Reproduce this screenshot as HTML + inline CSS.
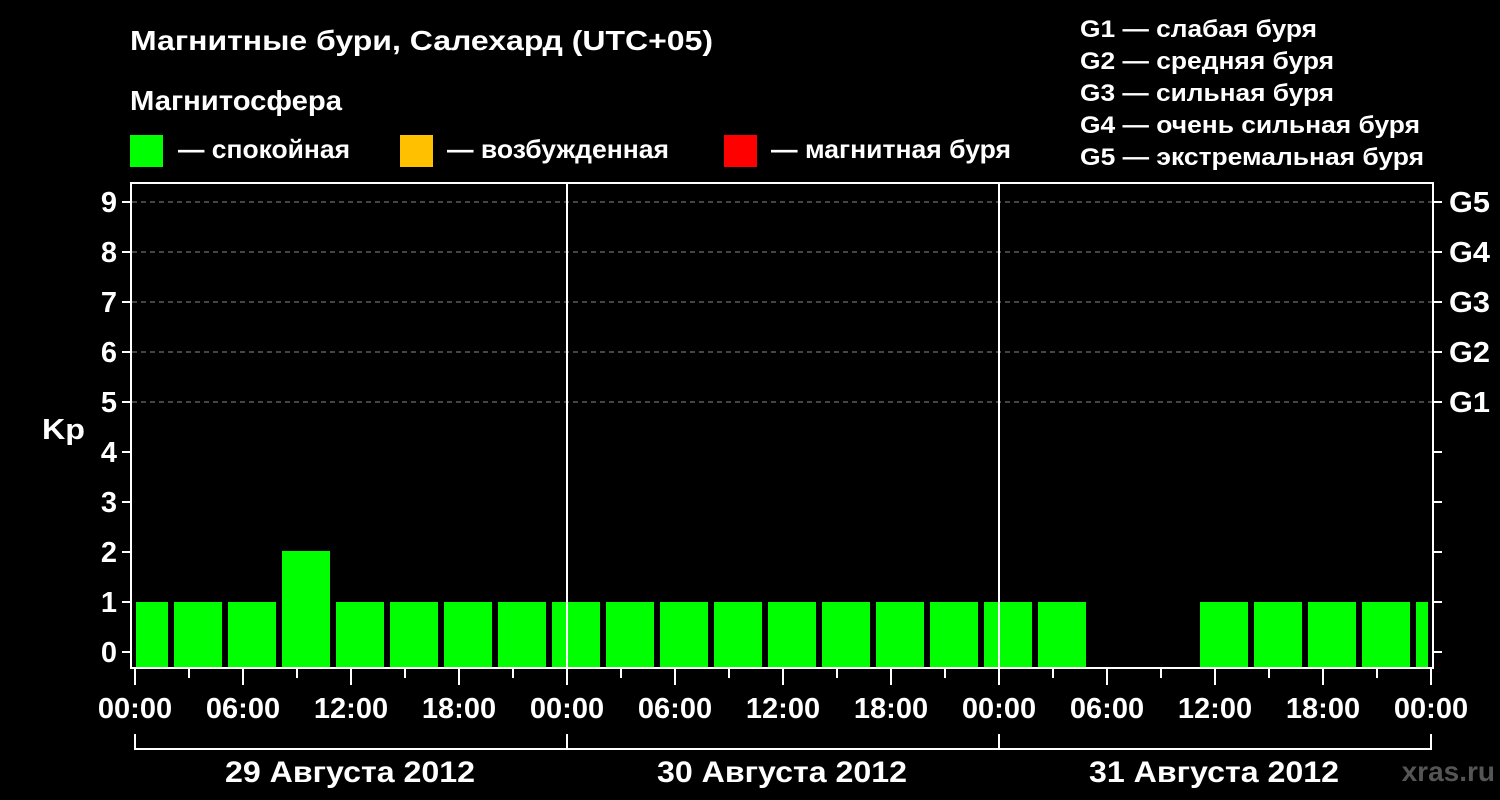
<!DOCTYPE html>
<html><head><meta charset="utf-8"><style>
html,body{margin:0;padding:0;background:#000;}
svg{display:block;}
text{font-family:"Liberation Sans",sans-serif;font-weight:bold;fill:#fff;}
</style></head><body>
<svg width="1500" height="800" xmlns="http://www.w3.org/2000/svg">
<rect width="1500" height="800" fill="#000"/>
<text x="130" y="50" font-size="28" textLength="583" lengthAdjust="spacingAndGlyphs">Магнитные бури, Салехард (UTC+05)</text>
<text x="130" y="110" font-size="28" textLength="212" lengthAdjust="spacingAndGlyphs">Магнитосфера</text>
<rect x="130" y="135" width="33" height="32" fill="#00ff00"/>
<text x="178" y="158" font-size="26" textLength="172" lengthAdjust="spacingAndGlyphs">— спокойная</text>
<rect x="400" y="135" width="33" height="32" fill="#ffc000"/>
<text x="447" y="158" font-size="26" textLength="222" lengthAdjust="spacingAndGlyphs">— возбужденная</text>
<rect x="724" y="135" width="33" height="32" fill="#ff0000"/>
<text x="771" y="158" font-size="26" textLength="240" lengthAdjust="spacingAndGlyphs">— магнитная буря</text>
<g font-size="24">
<text x="1080" y="37" textLength="237" lengthAdjust="spacingAndGlyphs">G1 — слабая буря</text>
<text x="1080" y="69" textLength="254" lengthAdjust="spacingAndGlyphs">G2 — средняя буря</text>
<text x="1080" y="101" textLength="254" lengthAdjust="spacingAndGlyphs">G3 — сильная буря</text>
<text x="1080" y="133" textLength="340" lengthAdjust="spacingAndGlyphs">G4 — очень сильная буря</text>
<text x="1080" y="165" textLength="344" lengthAdjust="spacingAndGlyphs">G5 — экстремальная буря</text>
</g>
<g stroke="#888" stroke-width="1" stroke-dasharray="5,4">
<line x1="132" y1="202" x2="1432" y2="202"/>
<line x1="132" y1="252" x2="1432" y2="252"/>
<line x1="132" y1="302" x2="1432" y2="302"/>
<line x1="132" y1="352" x2="1432" y2="352"/>
<line x1="132" y1="402" x2="1432" y2="402"/>
</g>
<g fill="#00ff00">
<rect x="136" y="602" width="32" height="66"/>
<rect x="174" y="602" width="48" height="66"/>
<rect x="228" y="602" width="48" height="66"/>
<rect x="282" y="551" width="48" height="117"/>
<rect x="336" y="602" width="48" height="66"/>
<rect x="390" y="602" width="48" height="66"/>
<rect x="444" y="602" width="48" height="66"/>
<rect x="498" y="602" width="48" height="66"/>
<rect x="552" y="602" width="48" height="66"/>
<rect x="606" y="602" width="48" height="66"/>
<rect x="660" y="602" width="48" height="66"/>
<rect x="714" y="602" width="48" height="66"/>
<rect x="768" y="602" width="48" height="66"/>
<rect x="822" y="602" width="48" height="66"/>
<rect x="876" y="602" width="48" height="66"/>
<rect x="930" y="602" width="48" height="66"/>
<rect x="984" y="602" width="48" height="66"/>
<rect x="1038" y="602" width="48" height="66"/>
<rect x="1200" y="602" width="48" height="66"/>
<rect x="1254" y="602" width="48" height="66"/>
<rect x="1308" y="602" width="48" height="66"/>
<rect x="1362" y="602" width="48" height="66"/>
<rect x="1416" y="602" width="12" height="66"/>
</g>
<g stroke="#fff" stroke-width="2" fill="none">
<rect x="131" y="183" width="1302" height="485"/>
<line x1="567" y1="183" x2="567" y2="668"/>
<line x1="999" y1="183" x2="999" y2="668"/>
</g>
<g stroke="#fff" stroke-width="2">
<line x1="122" y1="202" x2="131" y2="202"/><line x1="122" y1="252" x2="131" y2="252"/>
<line x1="122" y1="302" x2="131" y2="302"/><line x1="122" y1="352" x2="131" y2="352"/>
<line x1="122" y1="402" x2="131" y2="402"/><line x1="122" y1="452" x2="131" y2="452"/>
<line x1="122" y1="502" x2="131" y2="502"/><line x1="122" y1="552" x2="131" y2="552"/>
<line x1="122" y1="602" x2="131" y2="602"/><line x1="122" y1="652" x2="131" y2="652"/>
<line x1="1433" y1="202" x2="1442" y2="202"/><line x1="1433" y1="252" x2="1442" y2="252"/>
<line x1="1433" y1="302" x2="1442" y2="302"/><line x1="1433" y1="352" x2="1442" y2="352"/>
<line x1="1433" y1="402" x2="1442" y2="402"/><line x1="1433" y1="452" x2="1442" y2="452"/>
<line x1="1433" y1="502" x2="1442" y2="502"/><line x1="1433" y1="552" x2="1442" y2="552"/>
<line x1="1433" y1="602" x2="1442" y2="602"/><line x1="1433" y1="652" x2="1442" y2="652"/>
</g>
<g font-size="29" text-anchor="end">
<text x="117" y="212">9</text><text x="117" y="262">8</text><text x="117" y="312">7</text>
<text x="117" y="362">6</text><text x="117" y="412">5</text><text x="117" y="462">4</text>
<text x="117" y="512">3</text><text x="117" y="562">2</text><text x="117" y="612">1</text>
<text x="117" y="662">0</text>
</g>
<text x="42" y="439" font-size="29" textLength="43" lengthAdjust="spacingAndGlyphs">Kp</text>
<g font-size="29">
<text x="1449" y="212" textLength="41" lengthAdjust="spacingAndGlyphs">G5</text><text x="1449" y="262" textLength="41" lengthAdjust="spacingAndGlyphs">G4</text><text x="1449" y="312" textLength="41" lengthAdjust="spacingAndGlyphs">G3</text>
<text x="1449" y="362" textLength="41" lengthAdjust="spacingAndGlyphs">G2</text><text x="1449" y="412" textLength="41" lengthAdjust="spacingAndGlyphs">G1</text>
</g>
<g stroke="#fff" stroke-width="2">
<line x1="135" y1="668" x2="135" y2="685"/><line x1="189" y1="668" x2="189" y2="678"/>
<line x1="243" y1="668" x2="243" y2="685"/><line x1="297" y1="668" x2="297" y2="678"/>
<line x1="351" y1="668" x2="351" y2="685"/><line x1="405" y1="668" x2="405" y2="678"/>
<line x1="459" y1="668" x2="459" y2="685"/><line x1="513" y1="668" x2="513" y2="678"/>
<line x1="567" y1="668" x2="567" y2="685"/><line x1="621" y1="668" x2="621" y2="678"/>
<line x1="675" y1="668" x2="675" y2="685"/><line x1="729" y1="668" x2="729" y2="678"/>
<line x1="783" y1="668" x2="783" y2="685"/><line x1="837" y1="668" x2="837" y2="678"/>
<line x1="891" y1="668" x2="891" y2="685"/><line x1="945" y1="668" x2="945" y2="678"/>
<line x1="999" y1="668" x2="999" y2="685"/><line x1="1053" y1="668" x2="1053" y2="678"/>
<line x1="1107" y1="668" x2="1107" y2="685"/><line x1="1161" y1="668" x2="1161" y2="678"/>
<line x1="1215" y1="668" x2="1215" y2="685"/><line x1="1269" y1="668" x2="1269" y2="678"/>
<line x1="1323" y1="668" x2="1323" y2="685"/><line x1="1377" y1="668" x2="1377" y2="678"/>
<line x1="1431" y1="668" x2="1431" y2="685"/>
</g>
<g font-size="29" text-anchor="middle">
<text x="135" y="718">00:00</text><text x="243" y="718">06:00</text><text x="351" y="718">12:00</text>
<text x="459" y="718">18:00</text><text x="567" y="718">00:00</text><text x="675" y="718">06:00</text>
<text x="783" y="718">12:00</text><text x="891" y="718">18:00</text><text x="999" y="718">00:00</text>
<text x="1107" y="718">06:00</text><text x="1215" y="718">12:00</text><text x="1323" y="718">18:00</text>
<text x="1431" y="718">00:00</text>
</g>
<g stroke="#fff" stroke-width="2" fill="none">
<polyline points="135,734 135,749 1431,749 1431,734"/>
<line x1="567" y1="734" x2="567" y2="749"/>
<line x1="999" y1="734" x2="999" y2="749"/>
</g>
<g font-size="30" text-anchor="middle">
<text x="350" y="782" textLength="250" lengthAdjust="spacingAndGlyphs">29 Августа 2012</text>
<text x="782" y="782" textLength="250" lengthAdjust="spacingAndGlyphs">30 Августа 2012</text>
<text x="1214" y="782" textLength="250" lengthAdjust="spacingAndGlyphs">31 Августа 2012</text>
</g>
<text x="1495" y="781" font-size="28" text-anchor="end" style="fill:#555">xras.ru</text>
</svg>
</body></html>
